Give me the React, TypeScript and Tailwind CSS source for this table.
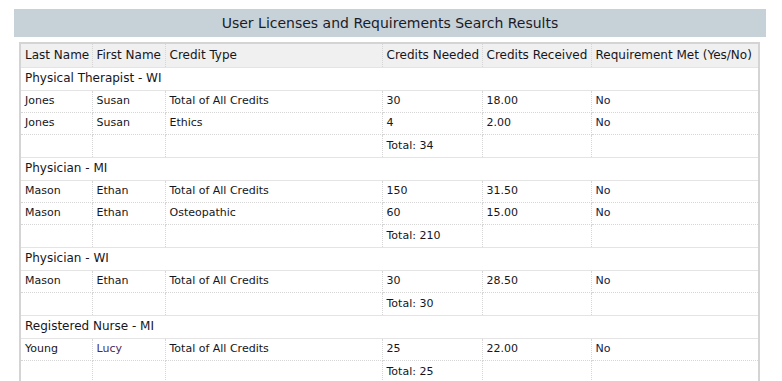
import React from 'react';

interface Row {
  last:     string;
  first:    string;
  type:     string;
  needed:   string;
  received: string;
  met:      string;
}

interface Group {
  title: string;
  rows:  Row[];
  total: number;
}

const GROUPS: Group[] = [
  {
    title: 'Physical Therapist - WI',
    rows: [
      { last: 'Jones', first: 'Susan', type: 'Total of All Credits', needed: '30', received: '18.00', met: 'No' },
      { last: 'Jones', first: 'Susan', type: 'Ethics', needed: '4', received: '2.00', met: 'No' },
    ],
    total: 34,
  },
  {
    title: 'Physician - MI',
    rows: [
      { last: 'Mason', first: 'Ethan', type: 'Total of All Credits', needed: '150', received: '31.50', met: 'No' },
      { last: 'Mason', first: 'Ethan', type: 'Osteopathic', needed: '60', received: '15.00', met: 'No' },
    ],
    total: 210,
  },
  {
    title: 'Physician - WI',
    rows: [
      { last: 'Mason', first: 'Ethan', type: 'Total of All Credits', needed: '30', received: '28.50', met: 'No' },
    ],
    total: 30,
  },
  {
    title: 'Registered Nurse - MI',
    rows: [
      { last: 'Young', first: 'Lucy', type: 'Total of All Credits', needed: '25', received: '22.00', met: 'No' },
    ],
    total: 25,
  },
];

const TH = 'border-x border-dotted border-[#d6d6d6] first:border-l-0 last:border-r-0 pl-[4px] pr-0 text-left font-normal text-[12px] h-[23px] whitespace-nowrap';
const TD = 'border border-dotted border-[#d6d6d6] first:border-l-0 last:border-r-0 pl-[4px] pr-0 py-0 text-[11px] leading-[14px]';

export default function App() {
  return (
    <div
      className="bg-white pt-[9px] pl-[14px] text-[#161620]"
      style={{ fontFamily: 'Verdana, "DejaVu Sans", sans-serif' }}
    >
      <div className="w-[752px] h-[28px] bg-[#c6d1d8] flex items-center justify-center text-[14px] text-[#1c1c28]">
        User Licenses and Requirements Search Results
      </div>

      <div className="ml-[5px] mt-[5px] w-[741px] border-2 border-[#d4d4d4]">
        <table className="w-full table-fixed border-collapse">
          <colgroup>
            <col className="w-[71px]" />
            <col className="w-[73px]" />
            <col className="w-[217px]" />
            <col className="w-[100px]" />
            <col className="w-[109px]" />
            <col className="w-[167px]" />
          </colgroup>
          <thead>
            <tr className="bg-[#f0f0f0]">
              <th className={TH}>Last Name</th>
              <th className={TH}>First Name</th>
              <th className={TH}>Credit Type</th>
              <th className={TH}>Credits Needed</th>
              <th className={TH}>Credits Received</th>
              <th className={TH}>Requirement Met (Yes/No)</th>
            </tr>
          </thead>
          <tbody>
            {GROUPS.map(g => (
              <React.Fragment key={g.title}>
                <tr className="h-[23px]">
                  <td colSpan={6} className="border-y border-[#e4e4e4] pl-[4px] py-0 text-[12px] leading-[15px]">
                    {g.title}
                  </td>
                </tr>
                {g.rows.map((r, i) => (
                  <tr key={i} className="h-[22px]">
                    <td className={TD}>{r.last}</td>
                    <td className={TD + (r.first === 'Lucy' ? ' text-[#4a2a5c]' : '')}>{r.first}</td>
                    <td className={TD}>{r.type}</td>
                    <td className={TD}>{r.needed}</td>
                    <td className={TD}>{r.received}</td>
                    <td className={TD + ' text-[#10204a]'}>{r.met}</td>
                  </tr>
                ))}
                <tr className="h-[23px]">
                  <td className={TD}></td>
                  <td className={TD}></td>
                  <td className={TD}></td>
                  <td className={TD}>Total: {g.total}</td>
                  <td className={TD}></td>
                  <td className={TD}></td>
                </tr>
              </React.Fragment>
            ))}
          </tbody>
        </table>
      </div>
    </div>
  );
}
